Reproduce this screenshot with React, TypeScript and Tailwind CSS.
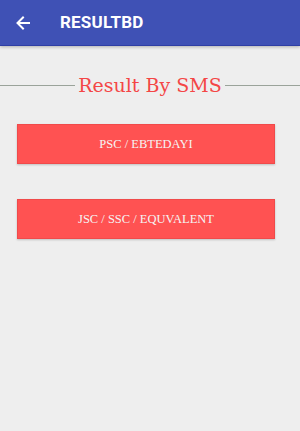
import React from "react";

export default function App() {
  return (
    <div className="w-[300px] h-[431px] bg-[#eeeeee] flex flex-col" style={{ fontFamily: "Roboto, sans-serif" }}>
      <div className="h-[46px] bg-[#3f51b5] border-b border-[#2f3fa5] shadow-[0_1px_3px_rgba(0,0,0,0.25)] flex items-center shrink-0">
        <svg className="ml-[16px]" width="14" height="14" viewBox="0 0 14 14" fill="none" stroke="white" strokeWidth="2" strokeLinecap="square">
          <path d="M13 7H2M7 1.5L1.5 7L7 12.5" />
        </svg>
        <span className="ml-[30px] text-white font-bold text-[17px] tracking-[0.2px]">RESULTBD</span>
      </div>
      <div className="flex items-center mt-[24px] h-[30px]">
        <div className="flex-1 h-px bg-[#9aa39a]" />
        <span className="px-[3px] text-[19px] text-[#f44646] leading-none" style={{ fontFamily: '"DejaVu Serif", serif' }}>Result By SMS</span>
        <div className="flex-1 h-px bg-[#9aa39a]" />
      </div>
      <div className="flex flex-col gap-[35px] mt-[24px] pl-[17px] pr-[25px]">
        <button className="h-[40px] bg-[#ff5252] border border-[#f04a4a] shadow-[0_1px_2px_rgba(0,0,0,0.2)] text-[#f5f5f5] text-[12.5px]" style={{ fontFamily: '"Liberation Serif", serif' }}>PSC / EBTEDAYI</button>
        <button className="h-[40px] bg-[#ff5252] border border-[#f04a4a] shadow-[0_1px_2px_rgba(0,0,0,0.2)] text-[#f5f5f5] text-[12.5px]" style={{ fontFamily: '"Liberation Serif", serif' }}>JSC / SSC / EQUVALENT</button>
      </div>
    </div>
  );
}
